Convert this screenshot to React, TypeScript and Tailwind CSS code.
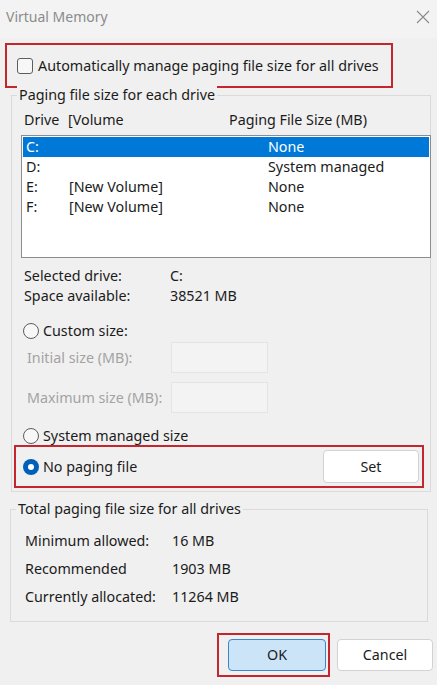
const font = { fontFamily: '"Noto Sans", "Open Sans", sans-serif' };

function Radio({ checked = false }: { checked?: boolean }) {
  if (checked) {
    return (
      <span className="flex h-[16px] w-[16px] items-center justify-center rounded-full bg-[#005fb8]">
        <span className="h-[6px] w-[6px] rounded-full bg-white" />
      </span>
    );
  }
  return <span className="h-[16px] w-[16px] rounded-full border border-[#5d5d5d] bg-[#f7f7f7]" />;
}

const drives = [
  { drive: "C:", volume: "", size: "None" },
  { drive: "D:", volume: "", size: "System managed" },
  { drive: "E:", volume: "[New Volume]", size: "None" },
  { drive: "F:", volume: "[New Volume]", size: "None" },
];

const totals = [
  { label: "Minimum allowed:", value: "16 MB" },
  { label: "Recommended", value: "1903 MB" },
  { label: "Currently allocated:", value: "11264 MB" },
];

export default function App() {
  return (
    <div className="h-[685px] w-[437px] overflow-hidden bg-[#f0f0f0] text-[14.3px] leading-[20px] text-[#1b1b1b]" style={font}>
      {/* title bar */}
      <div className="flex h-[38px] items-start justify-between bg-[#f3f3f3] pl-[6px] pr-[7px] pt-[7px]">
        <span className="text-[14px] text-[#8b8b8b]">Virtual Memory</span>
        <svg width="14" height="14" viewBox="0 0 14 14" className="mt-[3px]">
          <path d="M1 1 L13 13 M13 1 L1 13" stroke="#8a8a8a" strokeWidth="1.1" fill="none" />
        </svg>
      </div>

      <div className="pl-[5px] pt-[5px]">
        <div className="flex h-[45px] w-[388px] items-center border-2 border-[#c4262e] pl-[10px]">
          <span className="h-[16px] w-[16px] rounded-[3px] border border-[#5d5d5d] bg-[#f7f7f7]" />
          <span className="ml-[5px]">Automatically manage paging file size for all drives</span>
        </div>
      </div>

      {/* paging file size per drive */}
      <div className="relative ml-[11px] mt-[7px] h-[397px] w-[420px] border border-[#dadada]">
        <span className="absolute left-[5px] top-[-11px] bg-[#f0f0f0] px-[2px]">Paging file size for each drive</span>

        <div className="flex pl-[12px] pt-[14px]">
          <span className="w-[44px]">Drive</span>
          <span className="w-[161px]">[Volume</span>
          <span>Paging File Size (MB)</span>
        </div>

        <div className="ml-[9px] mr-[-1px] mt-[5px] h-[123px] border border-[#8c8c8c] bg-white p-px">
          {drives.map((d, i) => (
            <div key={d.drive} className={`flex h-[20px] items-center pl-[3px] ${i === 0 ? "bg-[#0078d7] text-white" : ""}`}>
              <span className="w-[43px]">{d.drive}</span>
              <span className="w-[199px]">{d.volume}</span>
              <span>{d.size}</span>
            </div>
          ))}
        </div>

        <div className="mt-[8px] pl-[12px]">
          <div className="flex h-[20px] items-center">
            <span className="w-[146px]">Selected drive:</span>
            <span>C:</span>
          </div>
          <div className="flex h-[20px] items-center">
            <span className="w-[146px]">Space available:</span>
            <span>38521 MB</span>
          </div>
        </div>

        <div className="mt-[15px] flex h-[20px] items-center gap-[4px] pl-[11px]">
          <Radio />
          <span>Custom size:</span>
        </div>

        <div className="mt-[1px] flex h-[31px] items-center pl-[15px] text-[#a3a3a3]">
          <span className="w-[144px]">Initial size (MB):</span>
          <span className="h-[31px] w-[97px] border border-[#e4e4e4] bg-[#f3f3f3]" />
        </div>
        <div className="mt-[9px] flex h-[31px] items-center pl-[15px] text-[#a3a3a3]">
          <span className="w-[144px]">Maximum size (MB):</span>
          <span className="h-[31px] w-[97px] border border-[#e4e4e4] bg-[#f3f3f3]" />
        </div>

        <div className="mt-[13px] flex h-[20px] items-center gap-[4px] pl-[11px]">
          <Radio />
          <span>System managed size</span>
        </div>

        <div className="ml-[2px] mt-[-1px] flex h-[43px] w-[410px] items-center border-2 border-[#c4262e] pl-[7px] pr-[3px]">
          <Radio checked />
          <span className="ml-[4px] flex-1">No paging file</span>
          <button className="h-[33px] w-[96px] rounded-[4px] border border-[#d2d2d2] bg-white">Set</button>
        </div>
      </div>

      {/* totals */}
      <div className="relative ml-[10px] mt-[17px] h-[113px] w-[418px] border border-[#dadada]">
        <span className="absolute left-[5px] top-[-11px] bg-[#f0f0f0] px-[2px]">Total paging file size for all drives</span>
        <div className="flex flex-col gap-[8px] pl-[14px] pt-[21px]">
          {totals.map((t) => (
            <div key={t.label} className="flex h-[20px] items-center">
              <span className="w-[147px]">{t.label}</span>
              <span>{t.value}</span>
            </div>
          ))}
        </div>
      </div>

      <div className="mt-[11px] flex justify-end pr-[4px]">
        <div className="border-2 border-[#c4262e] py-[4px] pl-[9px] pr-[2px]">
          <button className="block h-[32px] w-[98px] rounded-[4px] border border-[#3d86c9] bg-[#cce4f7]">OK</button>
        </div>
        <button className="ml-[7px] mt-[6px] h-[32px] w-[96px] rounded-[4px] border border-[#d2d2d2] bg-white">Cancel</button>
      </div>
    </div>
  );
}
